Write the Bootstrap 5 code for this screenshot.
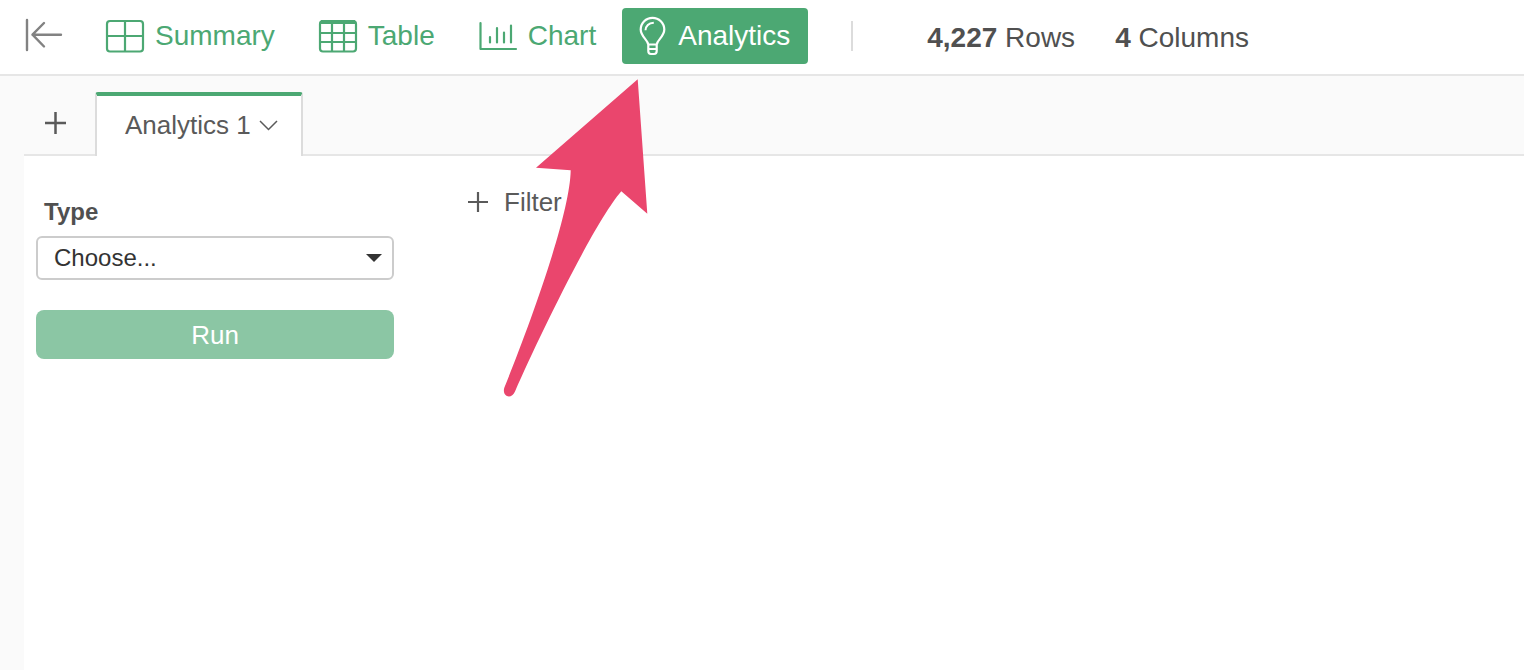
<!DOCTYPE html>
<html lang="en">
<head>
<meta charset="utf-8">
<meta name="viewport" content="width=device-width, initial-scale=1">
<title>Analytics</title>
<link href="https://cdn.jsdelivr.net/npm/bootstrap@5.3.0/dist/css/bootstrap.min.css" rel="stylesheet">
<style>
  :root { --brand: #4ca873; --line: #e6e6e6; --ink: #505050; }
  body { font-family: "Liberation Sans", Arial, sans-serif; color: var(--ink); background: #fafafa; }
  svg { display: block; flex: none; fill: none; overflow: visible; }
  .topbar { height: 76px; border-bottom: 2px solid var(--line); padding-left: 25px; padding-bottom: 2px; font-size: 28px; line-height: 32px; }
  .icon-btn { border: 0; background: none; padding: 0; color: #5a5a5a; }
  .back-btn { margin-right: 26px; color: #828282; }
  .view-link { display: flex; align-items: center; gap: 11px; height: 56px; padding: 0 18px; border-radius: 4px; color: var(--brand); text-decoration: none; }
  .view-link.active { background: var(--brand); color: #fff; }
  .split { width: 2px; height: 30px; background: #dcdcdc; margin-left: 43px; margin-right: 74px; }
  .counts { gap: 40px; }
  .workspace { margin-left: 24px; }
  .tabs { height: 80px; border-bottom: 2px solid var(--line); }
  .add-tab { margin: 0 28px 20px 20px; }
  .sheet-tab { height: 64px; margin-bottom: -2px; padding: 0 24px 2px 28px; gap: 9px; font-size: 26px; line-height: 30px; color: #5a5a5a; background: #fff; border: 2px solid #dcdcdc; border-top: 4px solid var(--brand); border-bottom: 0; border-radius: 3px 3px 0 0; }
  .sheet { background: #fff; flex: 1; }
  .options { width: 382px; flex: none; padding: 42px 12px 12px; }
  .type-label { font-size: 24px; line-height: 28px; padding-left: 8px; margin-bottom: 10px; }
  .type-select { height: 44px; padding: 0 40px 0 16px; border: 2px solid #ccc; border-radius: 6px; font-size: 24px; line-height: 28px; color: #333; background-color: #fff;
    background-image: url("data:image/svg+xml,%3Csvg xmlns='http://www.w3.org/2000/svg' viewBox='0 0 16 8'%3E%3Cpath d='M0 0h16L8 8z' fill='%23333'/%3E%3C/svg%3E"); background-size: 16px 8px; background-position: right 10px center; }
  .run-btn { height: 49px; margin-top: 30px; border: 0; border-radius: 8px; background: #8bc6a4; color: #fff; font-size: 26px; line-height: 30px; }
  .filter-btn { margin: 30px 0 0 61px; gap: 15px; font-size: 26px; line-height: 32px; }
  .pointer { position: absolute; left: 500px; top: 76px; pointer-events: none; }
</style>
</head>
<body class="position-relative min-vh-100 d-flex flex-column">
<header class="topbar d-flex align-items-center bg-white text-nowrap">
  <button type="button" class="icon-btn back-btn" aria-label="Back">
    <svg width="37" height="34" viewBox="0 0 37 34" stroke="currentColor" stroke-width="2.400"><path d="M2 1v30M36 15.700H7.500M19 4L7.500 15.700L19 27.500" stroke-linecap="round" stroke-linejoin="round"/></svg>
  </button>
  <nav class="d-flex gap-2" aria-label="Views">
    <a class="view-link" href="#summary">
      <svg width="38" height="34" viewBox="0 0 38 34" stroke="currentColor" stroke-width="2.200"><rect x="1" y="2" width="36" height="30.500" rx="3"/><path d="M19 2v30M1 17h36"/></svg>
      Summary</a>
    <a class="view-link" href="#table">
      <svg width="38" height="34" viewBox="0 0 38 34" stroke="currentColor" stroke-width="2.200"><rect x="1" y="2" width="36" height="30.500" rx="3"/><path d="M2 3h34" stroke-width="4"/><path d="M13 4v28M25 4v28M1 14h36M1 23h36"/></svg>
      Table</a>
    <a class="view-link" href="#chart">
      <svg width="38" height="34" viewBox="0 0 38 34" stroke="currentColor" stroke-width="2.200" stroke-linecap="round" stroke-linejoin="round"><path d="M1.500 4v26H37M11 18v5.500M18 9v14.500M25 13.500v10M32 6.500v17"/></svg>
      Chart</a>
    <a class="view-link active" href="#analytics" aria-current="page">
      <svg width="27" height="38" viewBox="0 0 27 38" stroke="currentColor" stroke-width="2.200" stroke-linejoin="round"><path d="M8.300 27.500C7.500 22.500 .7 19.500.7 12.600a11.800 11.800 0 0 1 23.600 0C24.300 19.500 17.500 22.500 16.700 27.500zM8.300 27.500v6.500q0 3 2.700 3h3q2.700 0 2.700-3v-6.500M8.300 32h8.400"/><path d="M5.500 13.300q.5-7 8.300-7.600" stroke-width="2"/></svg>
      Analytics</a>
  </nav>
  <div class="split"></div>
  <div class="counts d-flex pt-1"><span><b>4,227</b> Rows</span><span><b>4</b> Columns</span></div>
</header>

<main class="workspace flex-grow-1 d-flex flex-column">
  <div class="tabs d-flex align-items-end">
    <button type="button" class="icon-btn add-tab" aria-label="Add analytics">
      <svg width="23" height="22" viewBox="0 0 23 22" stroke="currentColor" stroke-width="2.500"><path d="M11.500 0v22M1 11h21"/></svg>
    </button>
    <button type="button" class="sheet-tab d-flex align-items-center">Analytics 1
      <svg width="17" height="9" viewBox="0 0 17 9" stroke="currentColor" stroke-width="1.500"><path d="M0 0l8.500 8.500L17 0"/></svg>
    </button>
  </div>
  <div class="sheet d-flex align-items-start">
    <form class="options">
      <label for="type" class="type-label fw-bold d-block">Type</label>
      <select id="type" class="form-select type-select"><option>Choose...</option></select>
      <button type="button" class="run-btn w-100 d-block">Run</button>
    </form>
    <button type="button" class="icon-btn filter-btn d-flex align-items-center">
      <svg width="22" height="20" viewBox="0 0 22 20" stroke="currentColor" stroke-width="2.200"><path d="M11 0v20M1 10h20"/></svg>
      Filter</button>
  </div>
</main>

<svg class="pointer" width="150" height="324" viewBox="0 0 150 324" aria-hidden="true"><path fill="#ea466d" d="M137.700 3.300L36 91.700l34.700 2.600C70 140 28 253 4.400 311.500C1.500 320 11 324.500 15 315.500C39 261 94 147 121.300 115.300l26 22.400z"/></svg>
<script src="https://cdn.jsdelivr.net/npm/bootstrap@5.3.0/dist/js/bootstrap.bundle.min.js"></script>
</body>
</html>
